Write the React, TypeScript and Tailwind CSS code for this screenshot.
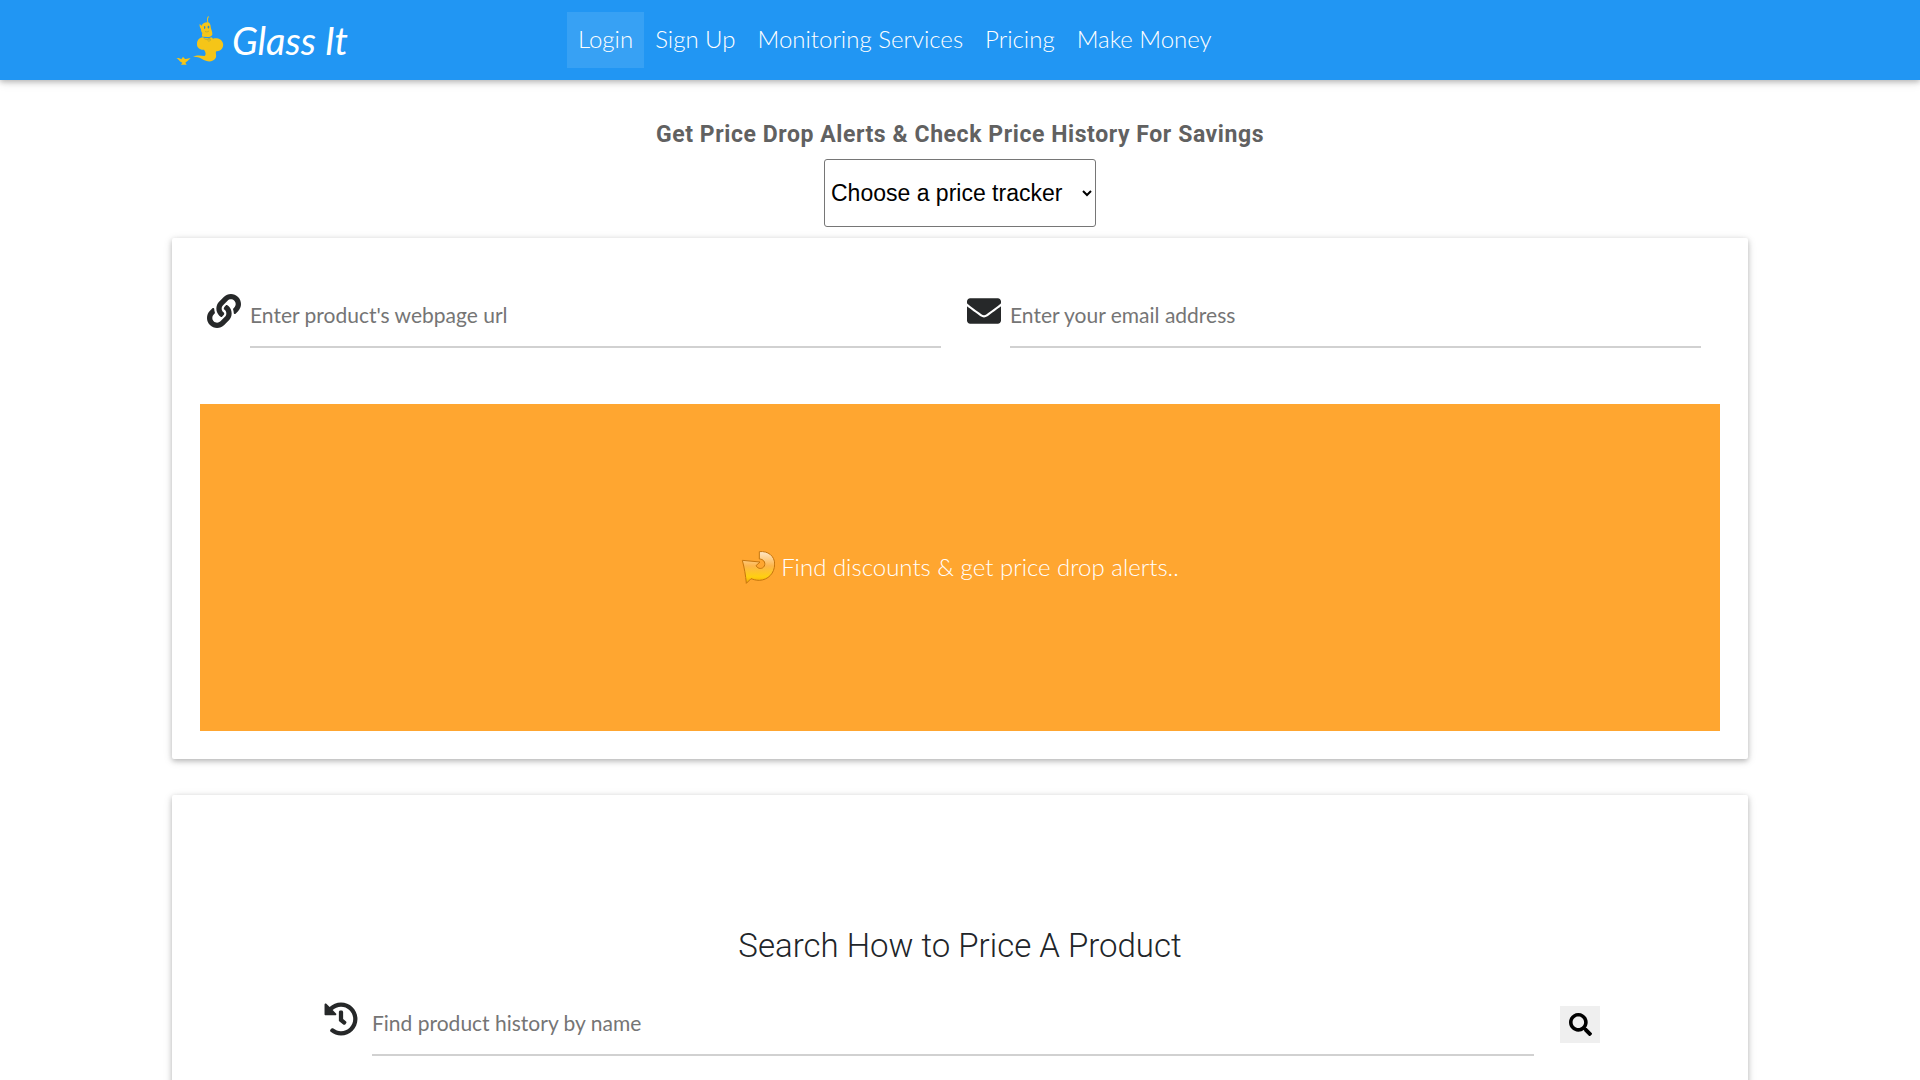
import React from 'react'
import { FaEnvelope, FaHistory, FaLink, FaSearch } from "react-icons/fa"

const links = ["Login", "Sign Up", "Monitoring Services", "Pricing", "Make Money"]

function Logo() {
    return (
        <a href="#" className="flex items-center w-[395px] h-20 pl-1 text-white">
            <svg viewBox="12 9 144 150" className="w-12 h-[50px]" fill="#f5c518">
                <path d="M106 31c-1-7-2-12 2-18 3-1 4 3 1 4-2 4-1 9 0 14 5 3 7 8 7 14 2 9 6 16 5 23-2 5-8 7-14 7l-16-1c-2-3-1-7 0-11-3-3-4-7-4-12-3-4-5-9-4-15l6 5c2-6 8-10 17-10z" />
                <path d="M92 76c8 4 18 4 27 0l4 4c13-4 27 2 30 14 3 13-6 25-20 24-4 4 2 13-2 20-5 9-17 12-27 9-13-4-20-14-41-13 12-6 25-3 35-2 5-4 3-12-2-19-13 1-22-7-21-18 0-10 7-18 17-19z" />
                <path d="M13 138c7-1 11 1 15 4 1-4 4-4 5-8 2 4 5 4 6 7 6 1 10-2 17-2-6 3-9 10-16 13l4 6H27l4-6c-9-2-9-10-18-14z" />
                <path d="M96 44c1-3 4-2 4 2s-3 7-4 3zM107 43c2-3 5-2 5 2 0 5-4 6-5 2z" fill="#2b8cc9" />
                <path d="M99 58c4 3 8 2 12-1M108 80c4-3 9 0 7 5-2 4-7 3-8 0m-12-6c5 4 12 5 20 2" stroke="#a5a43f" strokeWidth="2" fill="none" />
            </svg>
            <span className="pl-2 text-[38px] leading-none italic">Glass It</span>
        </a>
    )
}

function Header() {
    return (
        <header className="flex items-center h-20 px-43 bg-[#2196f3] shadow-[0_2px_5px_rgba(0,0,0,0.2),0_2px_10px_rgba(0,0,0,0.14)]">
            <Logo />
            <nav className="flex items-center">
                {links.map((name, i) => (
                    <a
                        key={name}
                        href="#"
                        className={`flex items-center h-14 px-[11px] pb-0.5 text-2xl font-light text-white ${i === 0 ? "bg-white/10" : ""}`}
                    >
                        {name}
                    </a>
                ))}
            </nav>
        </header>
    )
}

function TrackForm() {
    return (
        <form className="p-7 bg-white rounded-xs shadow-[0_2px_5px_rgba(0,0,0,0.2),0_2px_10px_rgba(0,0,0,0.14)]">
            <div className="flex gap-[26px] pl-[7px] pr-[19px] pt-5 pb-14">
                <div className="flex flex-1 gap-[9px]">
                    <label htmlFor="url" className="pt-2 text-[#262829]"><FaLink size={34} aria-label="Product url" /></label>
                    <input id="url" type="url" placeholder="Enter product's webpage url" className="flex-1 min-w-0 h-[62px] pb-1 border-b-2 border-[#d1d1d1] text-[21px] placeholder:text-[#757575] outline-none" />
                </div>
                <div className="flex flex-1 gap-[9px]">
                    <label htmlFor="email" className="pt-2 text-[#262829]"><FaEnvelope size={34} aria-label="Email" /></label>
                    <input id="email" type="email" placeholder="Enter your email address" className="flex-1 min-w-0 h-[62px] pb-1 border-b-2 border-[#d1d1d1] text-[21px] placeholder:text-[#757575] outline-none" />
                </div>
            </div>
            <button type="submit" className="flex items-center justify-center gap-1.5 w-full h-[327px] pb-0.5 bg-[#ffa630] text-2xl font-light text-white">
                <svg viewBox="9 12 102 108" className="w-[34px] h-9">
                    <defs>
                        <linearGradient id="arrow" x1="0" y1="0" x2="0" y2="1">
                            <stop offset="0" stopColor="#ffe8c8" />
                            <stop offset="0.45" stopColor="#fdb54b" />
                            <stop offset="0.8" stopColor="#ffd010" />
                            <stop offset="1" stopColor="#f0a008" />
                        </linearGradient>
                    </defs>
                    <path d="M64 20c26-3 46 13 46 37 0 28-20 48-46 49-12 0-18-3-25-5l-14 14c-2-24-6-46-12-69l53 5-12 11c6 11 20 11 25 1 5-12-4-21-15-21z" fill="url(#arrow)" stroke="#c5750d" strokeWidth="3" strokeLinejoin="round" />
                </svg>
                Find discounts &amp; get price drop alerts..
            </button>
        </form>
    )
}

function SearchProduct() {
    return (
        <section className="mt-9 px-37 pt-32 pb-20 bg-white rounded-xs shadow-[0_2px_5px_rgba(0,0,0,0.2),0_2px_10px_rgba(0,0,0,0.14)]">
            <h2 className="text-center text-[33px] leading-[46px] font-light font-[Roboto,sans-serif] text-[#212529]">Search How to Price A Product</h2>
            <form className="flex pl-1 pt-[25px]">
                <label htmlFor="history" className="w-12 pt-2 text-[#262829]"><FaHistory size={34} aria-label="Product history" /></label>
                <input id="history" type="text" placeholder="Find product history by name" className="flex-1 min-w-0 h-[62px] pb-1 border-b-2 border-[#d1d1d1] text-[21px] placeholder:text-[#757575] outline-none" />
                <button type="submit" aria-label="Search" className="flex items-center justify-center w-10 h-[37px] mt-3 ml-[26px] bg-[#efefef] text-black">
                    <FaSearch size={23} />
                </button>
            </form>
        </section>
    )
}

function App() {
    return (
        <div className="bg-white font-[Lato,sans-serif]">
            <Header />
            <main className="px-43">
                <div className="flex flex-col items-center pt-[41px] pb-[11px]">
                    <h1 className="text-[23px] leading-7 font-bold tracking-wide font-[Roboto,sans-serif] text-[#616161]">Get Price Drop Alerts &amp; Check Price History For Savings</h1>
                    <select aria-label="Price tracker" className="w-[272px] h-[68px] mt-2.5 px-0.5 border border-[#767676] rounded-[3px] bg-white text-black text-[23px] font-['Liberation_Sans',sans-serif]">
                        <option>Choose a price tracker</option>
                    </select>
                </div>
                <TrackForm />
                <SearchProduct />
            </main>
        </div>
    )
}

export default App
